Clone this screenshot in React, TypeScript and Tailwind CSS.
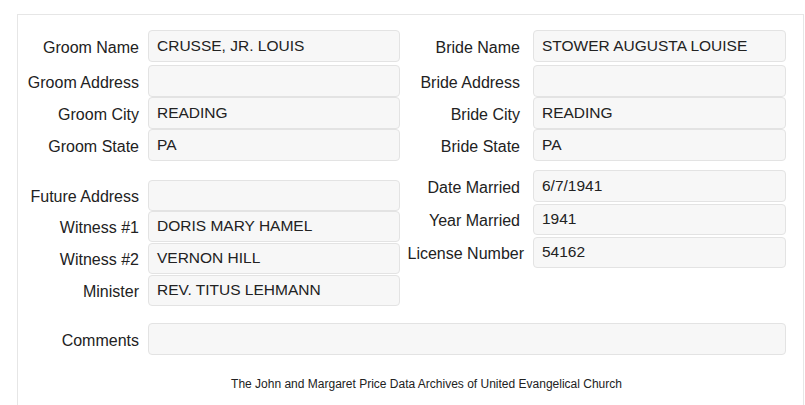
type Row = { label: string; value: string; mt: string; h: string; lblClass?: string };

const groom: Row[] = [
  { label: "Groom Name", value: "CRUSSE, JR. LOUIS", mt: "mt-0", h: "h-[32px]" },
  { label: "Groom Address", value: "", mt: "mt-[3px]", h: "h-[32px]" },
  { label: "Groom City", value: "READING", mt: "mt-0", h: "h-[32px]" },
  { label: "Groom State", value: "PA", mt: "mt-0", h: "h-[32px]" },
];

const bride: Row[] = [
  { label: "Bride Name", value: "STOWER AUGUSTA LOUISE", mt: "mt-0", h: "h-[32px]" },
  { label: "Bride Address", value: "", mt: "mt-[3px]", h: "h-[32px]" },
  { label: "Bride City", value: "READING", mt: "mt-0", h: "h-[32px]" },
  { label: "Bride State", value: "PA", mt: "mt-0", h: "h-[32px]" },
];

const others: Row[] = [
  { label: "Future Address", value: "", mt: "mt-0", h: "h-[31px]" },
  { label: "Witness #1", value: "DORIS MARY HAMEL", mt: "mt-0", h: "h-[31px]" },
  { label: "Witness #2", value: "VERNON HILL", mt: "mt-[1px]", h: "h-[31px]" },
  { label: "Minister", value: "REV. TITUS LEHMANN", mt: "mt-[1px]", h: "h-[31px]" },
];

const married: Row[] = [
  { label: "Date Married", value: "6/7/1941", mt: "mt-0", h: "h-[32px]" },
  { label: "Year Married", value: "1941", mt: "mt-[2px]", h: "h-[31px]" },
  { label: "License Number", value: "54162", mt: "mt-[2px]", h: "h-[31px]", lblClass: "-mr-[4px]" },
];

function Box({ value, w, h }: { value: string; w: string; h: string }) {
  return (
    <div
      className={`${w} ${h} flex items-center pl-[8px] bg-[#f7f7f7] border border-[#e3e3e3] rounded-[4px] text-[15.5px] text-[#222] pb-[1px]`}
    >
      {value}
    </div>
  );
}

function LeftRows({ rows }: { rows: Row[] }) {
  return (
    <div className="flex flex-col">
      {rows.map((r) => (
        <div key={r.label} className={`flex items-center ${r.mt}`}>
          <div className="w-[121px] text-right text-[16px] text-[#222] pt-[3px]">{r.label}</div>
          <div className="ml-[9px]">
            <Box value={r.value} w="w-[252px]" h={r.h} />
          </div>
        </div>
      ))}
    </div>
  );
}

function RightRows({ rows }: { rows: Row[] }) {
  return (
    <div className="flex flex-col">
      {rows.map((r) => (
        <div key={r.label} className={`flex items-center ${r.mt}`}>
          <div className="w-[120px] flex justify-end pt-[3px]">
            <span className={`text-[16px] text-[#222] whitespace-nowrap ${r.lblClass ?? ""}`}>{r.label}</span>
          </div>
          <div className="ml-[13px]">
            <Box value={r.value} w="w-[253px]" h={r.h} />
          </div>
        </div>
      ))}
    </div>
  );
}

export default function App() {
  return (
    <div
      className="w-[805px] h-[405px] overflow-hidden bg-white pt-[14px] pl-[17px]"
      style={{ fontFamily: '"Liberation Sans", Arial, sans-serif' }}
    >
      <div className="w-[787px] border border-[#e6e6e6] pt-[15px] pb-[40px]">
        <div className="flex">
          <div className="w-[382px]">
            <LeftRows rows={groom} />
          </div>
          <div>
            <RightRows rows={bride} />
          </div>
        </div>

        <div className="flex">
          <div className="w-[382px] mt-[19px]">
            <LeftRows rows={others} />
          </div>
          <div className="mt-[9px]">
            <RightRows rows={married} />
          </div>
        </div>

        <div className="flex items-center mt-[17px]">
          <div className="w-[121px] text-right text-[16px] text-[#222] pt-[3px]">Comments</div>
          <div className="ml-[9px]">
            <Box value="" w="w-[638px]" h="h-[32px]" />
          </div>
        </div>

        <div className="mt-[21px] pl-[32px] text-center text-[12px] leading-[16px] text-[#222]">
          The John and Margaret Price Data Archives of United Evangelical Church
        </div>
      </div>
    </div>
  );
}
